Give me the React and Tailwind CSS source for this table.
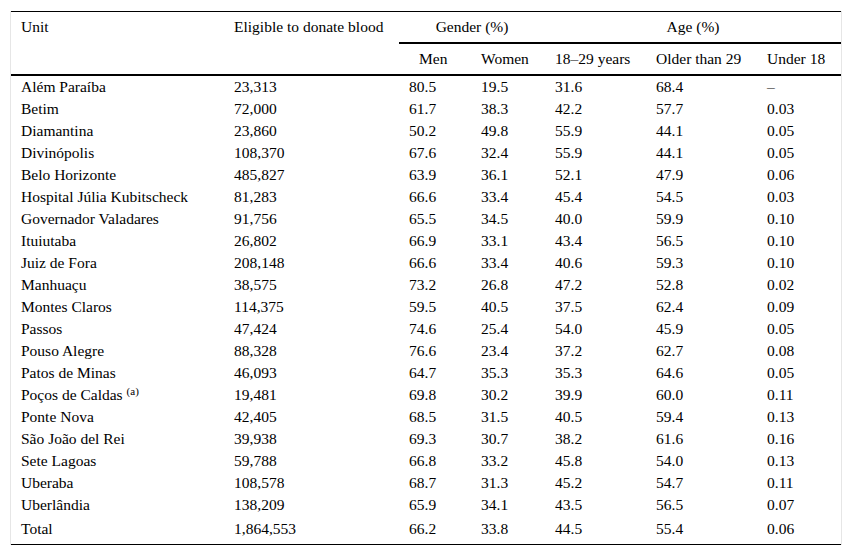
import React from "react";

const rows = [
  ["Além Paraíba", "23,313", "80.5", "19.5", "31.6", "68.4", "–"],
  ["Betim", "72,000", "61.7", "38.3", "42.2", "57.7", "0.03"],
  ["Diamantina", "23,860", "50.2", "49.8", "55.9", "44.1", "0.05"],
  ["Divinópolis", "108,370", "67.6", "32.4", "55.9", "44.1", "0.05"],
  ["Belo Horizonte", "485,827", "63.9", "36.1", "52.1", "47.9", "0.06"],
  ["Hospital Júlia Kubitscheck", "81,283", "66.6", "33.4", "45.4", "54.5", "0.03"],
  ["Governador Valadares", "91,756", "65.5", "34.5", "40.0", "59.9", "0.10"],
  ["Ituiutaba", "26,802", "66.9", "33.1", "43.4", "56.5", "0.10"],
  ["Juiz de Fora", "208,148", "66.6", "33.4", "40.6", "59.3", "0.10"],
  ["Manhuaçu", "38,575", "73.2", "26.8", "47.2", "52.8", "0.02"],
  ["Montes Claros", "114,375", "59.5", "40.5", "37.5", "62.4", "0.09"],
  ["Passos", "47,424", "74.6", "25.4", "54.0", "45.9", "0.05"],
  ["Pouso Alegre", "88,328", "76.6", "23.4", "37.2", "62.7", "0.08"],
  ["Patos de Minas", "46,093", "64.7", "35.3", "35.3", "64.6", "0.05"],
  ["Poços de Caldas", "19,481", "69.8", "30.2", "39.9", "60.0", "0.11"],
  ["Ponte Nova", "42,405", "68.5", "31.5", "40.5", "59.4", "0.13"],
  ["São João del Rei", "39,938", "69.3", "30.7", "38.2", "61.6", "0.16"],
  ["Sete Lagoas", "59,788", "66.8", "33.2", "45.8", "54.0", "0.13"],
  ["Uberaba", "108,578", "68.7", "31.3", "45.2", "54.7", "0.11"],
  ["Uberlândia", "138,209", "65.9", "34.1", "43.5", "56.5", "0.07"],
];

const total = ["Total", "1,864,553", "66.2", "33.8", "44.5", "55.4", "0.06"];

export default function App() {
  return (
    <div className="w-[852px] h-[557px] bg-white pt-[11px] pl-[10px] text-black text-[15.5px] leading-[22px] font-[family-name:'Liberation_Serif','Times_New_Roman',serif]">
      <div className="w-[832px] border-x border-[#e6e6e6]">
        <table className="w-[830px] table-fixed border-separate border-spacing-0 text-left">
          <colgroup>
            <col className="w-[213px]" />
            <col className="w-[175px]" />
            <col className="w-[72px]" />
            <col className="w-[74px]" />
            <col className="w-[101px]" />
            <col className="w-[111px]" />
            <col className="w-[84px]" />
          </colgroup>
          <thead>
            <tr>
              <th rowSpan={2} className="font-normal align-top pl-[10px] pt-[4px] border-t border-b-2 border-black">
                Unit
              </th>
              <th rowSpan={2} className="font-normal align-top pl-[10px] pt-[4px] border-t border-b-2 border-black whitespace-nowrap">
                Eligible to donate blood
              </th>
              <th colSpan={2} className="font-normal text-center py-[4px] border-t border-b-2 border-black">
                Gender (%)
              </th>
              <th colSpan={3} className="font-normal text-center py-[4px] border-t border-b-2 border-black">
                Age (%)
              </th>
            </tr>
            <tr>
              <th className="font-normal pl-[20px] py-[4px] border-b-2 border-black">Men</th>
              <th className="font-normal pl-[10px] py-[4px] border-b-2 border-black">Women</th>
              <th className="font-normal pl-[10px] py-[4px] border-b-2 border-black whitespace-nowrap">18–29 years</th>
              <th className="font-normal pl-[10px] py-[4px] border-b-2 border-black whitespace-nowrap">Older than 29</th>
              <th className="font-normal pl-[10px] py-[4px] border-b-2 border-black whitespace-nowrap">Under 18</th>
            </tr>
          </thead>
          <tbody>
            {rows.map((r) => (
              <tr key={r[0]} className="h-[22px]">
                {r.map((c, i) => (
                  <td key={i} className="pl-[10px] p-0 whitespace-nowrap">
                    {c}
                    {i === 0 && r[0] === "Poços de Caldas" ? (
                      <sup className="text-[11px] ml-[4px]">(a)</sup>
                    ) : null}
                  </td>
                ))}
              </tr>
            ))}
            <tr>
              {total.map((c, i) => (
                <td key={i} className="pl-[10px] pt-[2px] pb-[4px] border-b border-black whitespace-nowrap">
                  {c}
                </td>
              ))}
            </tr>
          </tbody>
        </table>
      </div>
    </div>
  );
}
